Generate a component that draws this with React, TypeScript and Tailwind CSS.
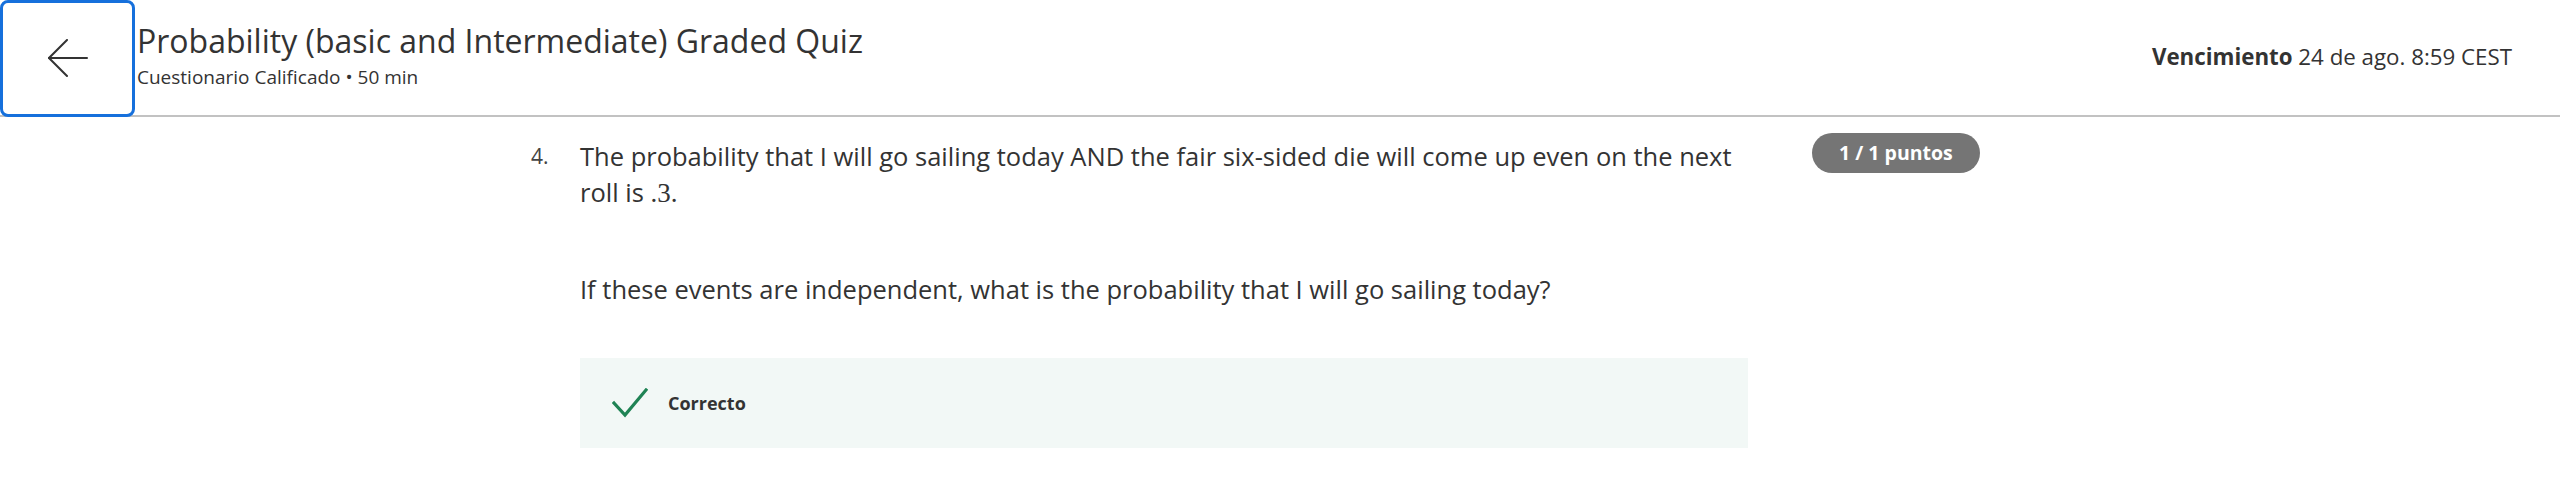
const BackArrow = () => (
  <svg width="40" height="40" viewBox="0 0 40 40" fill="none" stroke="#333" strokeWidth="2" strokeLinecap="round">
    <path d="M39 19H1" />
    <path d="M19 1L1 19L19 37" />
  </svg>
);

const Check = () => (
  <svg width="36" height="30" viewBox="0 0 36 30" fill="none" stroke="#1f8354" strokeWidth="3.2" strokeLinecap="square">
    <path d="M2 15L13 27L34 2" />
  </svg>
);

const App = () => {
  return (
    <div className="w-[2560px] h-[488px] bg-white text-[#333] overflow-hidden" style={{ fontFamily: '"Open Sans", "Noto Sans", sans-serif' }}>
      <header className="flex items-start h-[117px] border-b-2 border-[#c2c2c2]">
        <button className="flex shrink-0 items-center justify-center w-[135px] h-[117px] border-[3px] border-[#1670dc] rounded-[8px] bg-white">
          <BackArrow />
        </button>
        <div className="flex flex-col ml-[2px] pt-[20px]">
          <h1 className="text-[32px] leading-[42px] font-normal text-[#333]">
            Probability (basic and Intermediate) Graded Quiz
          </h1>
          <p className="text-[19px] leading-[26px] mt-[2px] text-[#333]">Cuestionario Calificado • 50 min</p>
        </div>
        <div className="ml-auto pr-[48px] pt-[42px] text-[22.3px] leading-[30px] text-[#333]">
          <span className="font-bold">Vencimiento</span> 24 de ago. 8:59 CEST
        </div>
      </header>

      <main className="flex pl-[531px] pt-[21px]">
        <div className="w-[49px] shrink-0 text-[21px] leading-[36px] text-[#444]">4.</div>
        <div className="w-[1168px] shrink-0">
          <p className="text-[25.5px] leading-[36px]">
            The probability that I will go sailing today AND the fair six-sided die will come up even on the next roll is{" "}
            <span className="text-[27px] leading-[36px]" style={{ fontFamily: '"Liberation Serif", "DejaVu Serif", serif' }}>.3.</span>
          </p>
          <p className="mt-[60px] text-[25.5px] leading-[36px]">
            If these events are independent, what is the probability that I will go sailing today?
          </p>
          <div className="flex items-center gap-[20px] mt-[51px] h-[90px] pl-[32px] bg-[#f2f8f6]">
            <Check />
            <span className="text-[18px] font-bold text-[#333]">Correcto</span>
          </div>
        </div>
        <div className="ml-[64px] mt-[-5px]">
          <span className="flex items-center justify-center h-[40px] px-[27px] rounded-full bg-[#757575] text-white text-[19.5px] font-bold">
            1 / 1 puntos
          </span>
        </div>
      </main>
    </div>
  );
};

export default App;
